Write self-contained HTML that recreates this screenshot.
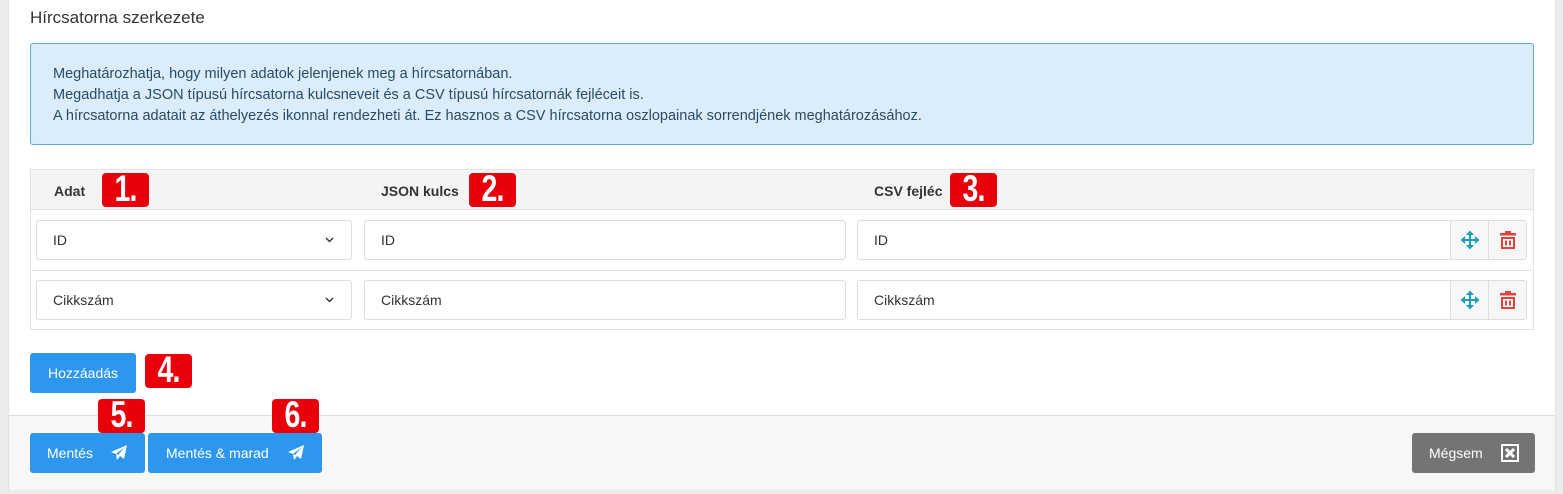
<!DOCTYPE html>
<html><head><meta charset="utf-8"><style>
*{box-sizing:border-box;margin:0;padding:0}
body{width:1563px;height:494px;background:#ececec;font-family:"Liberation Sans",sans-serif;position:relative;overflow:hidden;color:#333}
.card{position:absolute;left:8px;top:0;width:1548px;height:490px;background:#fff;border:1px solid #e2e2e2;border-top:none}
.abs{position:absolute}
h1{position:absolute;left:30px;top:8px;font-size:17px;font-weight:normal;color:#333}
.info{left:30px;top:43px;width:1504px;height:102px;background:#dbedfb;border:1px solid #5ea9df;border-radius:3px;padding:20px 22px;font-size:14.5px;line-height:21px;color:#2c4a63}
.tbl{left:30px;top:169px;width:1504px;height:161px;border:1px solid #e3e3e3}
.th{left:30px;top:169px;width:1504px;height:41px;background:#f4f4f4;border:1px solid #e3e3e3}
.hl{font-size:14px;font-weight:bold;color:#333;top:183px}
.badge{background:#e8000a;border-radius:4px;height:34px;width:47px;overflow:hidden}
.badge span{display:block;color:#fff;font-weight:bold;font-size:30px;line-height:30px;text-align:center;transform:scale(.95,1.25);transform-origin:50% 0;margin-top:-2px;letter-spacing:-1px}
.inp{height:40px;border:1px solid #ddd;border-radius:3px;background:#fff;font-size:14px;padding-left:16px;line-height:38px;color:#333}
.sep{left:31px;width:1502px;height:1px;background:#e3e3e3}
.btnbox{width:39px;height:40px;background:#f7f7f7;border:1px solid #ddd}
.btn{background:#2c97ed;color:#fff;border-radius:3px;font-size:14px;text-align:center;line-height:40px;height:40px}
.foot{left:9px;top:415px;width:1546px;height:75px;background:#f7f7f7;border-top:1px solid #ddd}
</style></head><body>
<div class="card"></div>
<h1>Hírcsatorna szerkezete</h1>
<div class="abs info">Meghatározhatja, hogy milyen adatok jelenjenek meg a hírcsatornában.<br>Megadhatja a JSON típusú hírcsatorna kulcsneveit és a CSV típusú hírcsatornák fejléceit is.<br>A hírcsatorna adatait az áthelyezés ikonnal rendezheti át. Ez hasznos a CSV hírcsatorna oszlopainak sorrendjének meghatározásához.</div>
<div class="abs tbl"></div>
<div class="abs th"></div>
<div class="abs hl" style="left:54px">Adat</div>
<div class="abs hl" style="left:381px">JSON kulcs</div>
<div class="abs hl" style="left:874px">CSV fejléc</div>
<div class="abs badge" style="left:102px;top:173px"><span>1.</span></div>
<div class="abs badge" style="left:469px;top:173px"><span>2.</span></div>
<div class="abs badge" style="left:950px;top:173px"><span>3.</span></div>

<div class="abs inp" style="left:36px;top:220px;width:316px">ID<svg style="position:absolute;right:17px;top:16px" width="9" height="6" viewBox="0 0 9 6"><path d="M1 1l3.5 3.5L8 1" stroke="#333" stroke-width="1.4" fill="none"/></svg></div>
<div class="abs inp" style="left:364px;top:220px;width:482px">ID</div>
<div class="abs inp" style="left:857px;top:220px;width:594px">ID</div>
<div class="abs sep" style="top:270px"></div>
<div class="abs inp" style="left:36px;top:280px;width:316px">Cikkszám<svg style="position:absolute;right:17px;top:16px" width="9" height="6" viewBox="0 0 9 6"><path d="M1 1l3.5 3.5L8 1" stroke="#333" stroke-width="1.4" fill="none"/></svg></div>
<div class="abs inp" style="left:364px;top:280px;width:482px">Cikkszám</div>
<div class="abs inp" style="left:857px;top:280px;width:594px">Cikkszám</div>

<div class="abs btnbox" style="left:1450px;top:220px"></div>
<div class="abs btnbox" style="left:1488px;top:220px;border-radius:0 3px 3px 0"></div>
<div class="abs btnbox" style="left:1450px;top:280px"></div>
<div class="abs btnbox" style="left:1488px;top:280px;border-radius:0 3px 3px 0"></div>
<svg class="abs" style="left:1460px;top:230px" width="20" height="20" viewBox="0 0 20 20"><path d="M10 0.5L6 5h3v4H5V6L0.5 10 5 14v-3h4v4H6l4 4.5 4-4.5h-3v-4h4v3l4.5-4L15 6v3h-4V5h3z" fill="#1aa1b8"/></svg>
<svg class="abs" style="left:1460px;top:290px" width="20" height="20" viewBox="0 0 20 20"><path d="M10 0.5L6 5h3v4H5V6L0.5 10 5 14v-3h4v4H6l4 4.5 4-4.5h-3v-4h4v3l4.5-4L15 6v3h-4V5h3z" fill="#1aa1b8"/></svg>
<svg class="abs" style="left:1498px;top:230px" width="20" height="20" viewBox="0 0 20 20"><path d="M7 1h6v2h5v2.5H2V3h5zM3 7h14v12H3z" fill="#e8413a"/><rect x="5" y="9" width="10" height="8" fill="#fff"/><rect x="7" y="10.5" width="2" height="5" fill="#e8413a"/><rect x="11" y="10.5" width="2" height="5" fill="#e8413a"/></svg>
<svg class="abs" style="left:1498px;top:290px" width="20" height="20" viewBox="0 0 20 20"><path d="M7 1h6v2h5v2.5H2V3h5zM3 7h14v12H3z" fill="#e8413a"/><rect x="5" y="9" width="10" height="8" fill="#fff"/><rect x="7" y="10.5" width="2" height="5" fill="#e8413a"/><rect x="11" y="10.5" width="2" height="5" fill="#e8413a"/></svg>

<div class="abs btn" style="left:30px;top:353px;width:106px">Hozzáadás</div>
<div class="abs badge" style="left:145px;top:354px"><span>4.</span></div>

<div class="abs foot"></div>
<div class="abs badge" style="left:98px;top:399px"><span>5.</span></div>
<div class="abs badge" style="left:272px;top:399px"><span>6.</span></div>
<div class="abs btn" style="left:30px;top:433px;width:115px;text-align:left;padding-left:17px">Mentés</div>
<div class="abs btn" style="left:148px;top:433px;width:174px;text-align:left;padding-left:18px">Mentés &amp; marad</div>
<svg class="abs" style="left:110px;top:444px" width="18" height="18" viewBox="0 0 18 18"><path d="M17 1L1 8l5 2 1 6 3-4 4 3zM6 10l9-7-7 8z" fill="#fff"/></svg>
<svg class="abs" style="left:287px;top:444px" width="18" height="18" viewBox="0 0 18 18"><path d="M17 1L1 8l5 2 1 6 3-4 4 3zM6 10l9-7-7 8z" fill="#fff"/></svg>
<div class="abs btn" style="left:1412px;top:433px;width:123px;background:#747474;text-align:left;padding-left:17px">Mégsem</div>
<svg class="abs" style="left:1500px;top:443px" width="20" height="20" viewBox="0 0 20 20"><rect x="1" y="1" width="18" height="18" fill="#fff"/><rect x="3" y="3" width="14" height="14" fill="#747474"/><path d="M6 6l8 8M14 6l-8 8" stroke="#fff" stroke-width="3"/></svg>
</body></html>
